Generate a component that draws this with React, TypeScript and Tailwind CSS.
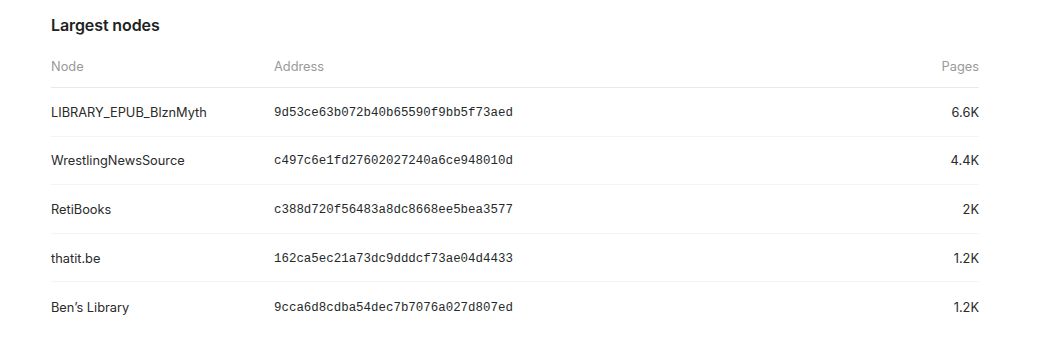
import React from "react";

const rows = [
  { node: "LIBRARY_EPUB_BlznMyth", address: "9d53ce63b072b40b65590f9bb5f73aed", pages: "6.6K" },
  { node: "WrestlingNewsSource", address: "c497c6e1fd27602027240a6ce948010d", pages: "4.4K" },
  { node: "RetiBooks", address: "c388d720f56483a8dc8668ee5bea3577", pages: "2K" },
  { node: "thatit.be", address: "162ca5ec21a73dc9dddcf73ae04d4433", pages: "1.2K" },
  { node: "Ben\u2019s Library", address: "9cca6d8cdba54dec7b7076a027d807ed", pages: "1.2K" },
];

export default function App() {
  return (
    <div className="w-[1052px] h-[347px] bg-white font-['Inter','Noto_Sans',sans-serif] text-[#222]">
      <div className="ml-[51px] w-[928px] pt-[15px]">
        <h2 className="text-[16px] leading-[20px] font-semibold tracking-[-0.1px] text-[#222]">Largest nodes</h2>
        <div className="mt-[22px] flex border-b border-[#e9e9e9] pb-[10px] text-[12.8px] leading-[20px] text-[#999]">
          <div className="w-[223px]">Node</div>
          <div className="flex-1">Address</div>
          <div className="text-right">Pages</div>
        </div>
        {rows.map((r, i) => (
          <div
            key={i}
            className={`flex h-[48.6px] items-center pt-[2px] text-[12.8px] leading-[20px] ${i < rows.length - 1 ? "border-b border-[#f4f4f4]" : ""}`}
          >
            <div className="w-[223px] text-[#2a2a2a]">{r.node}</div>
            <div className="flex-1 font-['Liberation_Mono',monospace] text-[12.45px] text-[#1f2a2a]">{r.address}</div>
            <div className="text-right text-[#2a2a2a]">{r.pages}</div>
          </div>
        ))}
      </div>
    </div>
  );
}
